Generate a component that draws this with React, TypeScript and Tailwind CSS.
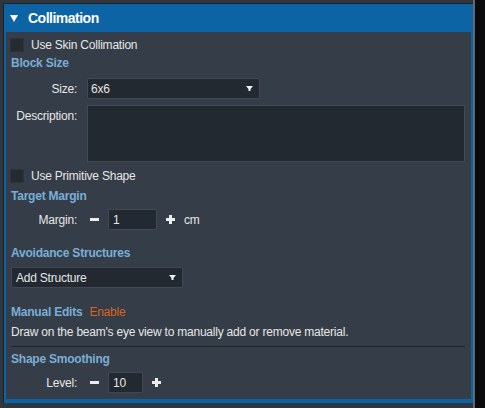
import React from 'react';

const Caret = () => (
  <svg width="7" height="6" viewBox="0 0 7 6" className="shrink-0">
    <path d="M0 0 H7 L4.5 3 V5 H2.5 V3 Z" fill="#f2f2f2" />
  </svg>
);

const Minus = () => (
  <span className="flex h-[21px] w-[18px] items-center justify-start">
    <span className="block h-[3px] w-[9px] bg-[#ececec]" />
  </span>
);

const Plus = () => (
  <svg width="9" height="9" viewBox="0 0 9 9" className="shrink-0">
    <rect x="3" y="0" width="3" height="9" fill="#ececec" />
    <rect x="0" y="3" width="9" height="3" fill="#ececec" />
  </svg>
);

const Checkbox = ({ label, className = '' }: { label: string; className?: string }) => (
  <div className={`flex items-center gap-[7px] ${className}`}>
    <span className="block h-[14px] w-[14px] border border-[#2c333b] bg-[#252b32]" />
    <span className="text-[#e6e6e6]">{label}</span>
  </div>
);

const SectionTitle = ({ children, className = '' }: { children: React.ReactNode; className?: string }) => (
  <div className={`h-[14px] leading-[14px] font-bold text-[#7aadd7] ${className}`}>{children}</div>
);

const FieldLabel = ({ children }: { children: React.ReactNode }) => (
  <span className="w-[66px] shrink-0 text-right text-[#e6e6e6]">{children}</span>
);

export default function App() {
  return (
    <div
      className="flex h-[408px] w-[485px] bg-[#0b0b0d] text-[12px] leading-[14px] tracking-[-0.22px]"
      style={{ fontFamily: '"Liberation Sans", Arial, sans-serif' }}
    >
      <div className="h-full w-[473px] bg-[#30363d] pl-[3px] pt-[3px]">
        <div className="h-[400px] border-b border-l border-t border-[#1d2227]">
          {/* Panel */}
          <div className="flex h-[399px] flex-col border-b-4 border-l-2 border-r-2 border-[#0d64a5] bg-[#353e48]">
            <div className="flex h-[28px] shrink-0 items-center gap-[10px] bg-[#0d64a5] pl-[4px] text-[14px] font-bold tracking-[-0.5px] text-white">
              <svg width="8" height="7" viewBox="0 0 8 7">
                <path d="M0 0 H8 L4 7 Z" fill="#ffffff" />
              </svg>
              <span>Collimation</span>
            </div>

            <div className="flex flex-col pl-[4px] pr-[6px]">
              <Checkbox label="Use Skin Collimation" className="mt-[6px]" />
              <SectionTitle className="mt-[4px] pl-[1px]">Block Size</SectionTitle>

              <div className="mt-[8px] flex items-center gap-[10px] pl-[1px]">
                <FieldLabel>Size:</FieldLabel>
                <div className="flex h-[21px] w-[173px] items-center justify-between rounded-[2px] border border-[#414a54] bg-[#222931] pl-[3px] pr-[6px] text-[#e6e6e6]">
                  <span>6x6</span>
                  <Caret />
                </div>
              </div>

              <div className="mt-[6px] flex items-start gap-[10px] pl-[1px]">
                <span className="w-[66px] shrink-0 pt-[4px] text-right text-[#e6e6e6]">Description:</span>
                <div className="h-[57px] flex-1 border border-[#414a54] bg-[#222931]" />
              </div>

              <Checkbox label="Use Primitive Shape" className="mt-[7px]" />
              <SectionTitle className="mt-[6px] pl-[1px]">Target Margin</SectionTitle>

              <div className="mt-[6px] flex items-center pl-[1px]">
                <FieldLabel>Margin:</FieldLabel>
                <span className="w-[13px]" />
                <Minus />
                <div className="flex h-[21px] w-[49px] items-center rounded-[2px] border border-[#414a54] bg-[#222931] pl-[4px] text-[#e6e6e6]">
                  1
                </div>
                <span className="w-[9px]" />
                <Plus />
                <span className="ml-[9px] text-[#e6e6e6]">cm</span>
              </div>

              <SectionTitle className="mt-[16px] pl-[1px]">Avoidance Structures</SectionTitle>
              <div className="ml-[1px] mt-[7px] flex h-[21px] w-[172px] items-center justify-between rounded-[2px] border border-[#414a54] bg-[#222931] pl-[4px] pr-[6px] text-[#e6e6e6]">
                <span>Add Structure</span>
                <Caret />
              </div>

              <div className="mt-[17px] flex h-[14px] items-center gap-[7px] pl-[1px]">
                <span className="font-bold text-[#7aadd7]">Manual Edits</span>
                <span className="text-[#d7651f]">Enable</span>
              </div>
              <div className="mt-[6px] pl-[1px] text-[#e6e6e6]">
                Draw on the beam's eye view to manually add or remove material.
              </div>
              <div className="ml-[1px] mt-[7px] h-[1px] bg-[#20252b]" />

              <SectionTitle className="mt-[5px] pl-[1px]">Shape Smoothing</SectionTitle>
              <div className="mt-[6px] flex items-center pl-[1px]">
                <FieldLabel>Level:</FieldLabel>
                <span className="w-[13px]" />
                <Minus />
                <div className="flex h-[21px] w-[35px] items-center rounded-[2px] border border-[#414a54] bg-[#222931] pl-[4px] text-[#e6e6e6]">
                  10
                </div>
                <span className="w-[9px]" />
                <Plus />
              </div>
            </div>
          </div>
        </div>
      </div>
      <div className="h-full w-[2px] bg-[#606973]" />
    </div>
  );
}
